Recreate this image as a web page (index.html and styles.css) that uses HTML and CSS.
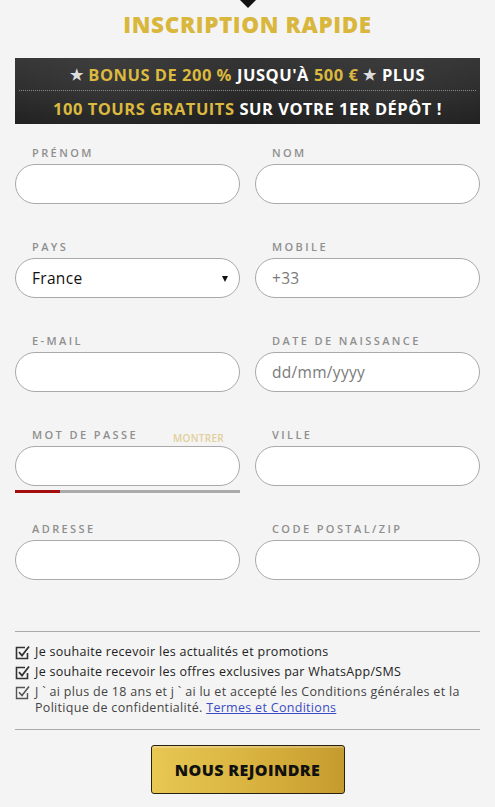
FILE: index.html
```html
<!DOCTYPE html>
<html lang="fr">
<head>
  <meta charset="UTF-8" />
  <meta name="viewport" content="width=device-width, initial-scale=1.0"/>
  <title>Inscription rapide</title>
  <link rel="stylesheet" href="styles.css">
</head>
<body>
  <div class="page">
    <div class="notch"></div>
    <h1 class="title">INSCRIPTION RAPIDE</h1>

    <div class="bonus">
      <div class="bonus-line">
        <span class="star">★</span> <span class="gold">BONUS DE 200 %</span> JUSQU'À <span class="gold">500 €</span> <span class="star">★</span> PLUS
      </div>
      <div class="bonus-sep"></div>
      <div class="bonus-line">
        <span class="gold">100 TOURS GRATUITS</span> SUR VOTRE 1ER DÉPÔT !
      </div>
    </div>

    <form class="form">
      <div class="field">
        <label class="label">PRÉNOM</label>
        <div class="input"></div>
      </div>
      <div class="field">
        <label class="label">NOM</label>
        <div class="input"></div>
      </div>

      <div class="field">
        <label class="label">PAYS</label>
        <div class="input select">
          <span class="value">France</span>
          <span class="caret"></span>
        </div>
      </div>
      <div class="field">
        <label class="label">MOBILE</label>
        <div class="input"><span class="placeholder">+33</span></div>
      </div>

      <div class="field">
        <label class="label">E-MAIL</label>
        <div class="input"></div>
      </div>
      <div class="field">
        <label class="label">DATE DE NAISSANCE</label>
        <div class="input"><span class="placeholder">dd/mm/yyyy</span></div>
      </div>

      <div class="field">
        <div class="label-row">
          <label class="label">MOT DE PASSE</label>
          <span class="show">MONTRER</span>
        </div>
        <div class="input"></div>
        <div class="strength"><div class="strength-fill" style="width: 20%"></div></div>
      </div>
      <div class="field">
        <label class="label">VILLE</label>
        <div class="input"></div>
      </div>

      <div class="field">
        <label class="label">ADRESSE</label>
        <div class="input"></div>
      </div>
      <div class="field">
        <label class="label">CODE POSTAL/ZIP</label>
        <div class="input"></div>
      </div>
    </form>

    <div class="checks">
      <div class="check">
        <svg class="box" viewBox="0 0 15 15" width="15" height="15"><path d="M10 2.5H1.5v11h11V8" fill="none" stroke="#333" stroke-width="1.6"/><path d="M4 7.2l3 3.3L14 1.5" fill="none" stroke="#333" stroke-width="1.8"/></svg>
        <span>Je souhaite recevoir les actualités et promotions</span>
      </div>
      <div class="check">
        <svg class="box" viewBox="0 0 15 15" width="15" height="15"><path d="M10 2.5H1.5v11h11V8" fill="none" stroke="#333" stroke-width="1.6"/><path d="M4 7.2l3 3.3L14 1.5" fill="none" stroke="#333" stroke-width="1.8"/></svg>
        <span>Je souhaite recevoir les offres exclusives par WhatsApp/SMS</span>
      </div>
      <div class="check">
        <svg class="box" viewBox="0 0 15 15" width="15" height="15"><path d="M10 2.5H1.5v11h11V8" fill="none" stroke="#555" stroke-width="1.4"/><path d="M4 7.2l3 3.3L14 1.5" fill="none" stroke="#555" stroke-width="1.6"/></svg>
        <p class="check-text">J ` ai plus de 18 ans et j ` ai lu et accepté les Conditions générales et la Politique de confidentialité. <a href="#" class="link">Termes et Conditions</a></p>
      </div>
    </div>

    <div class="actions">
      <button class="join" type="button">NOUS REJOINDRE</button>
    </div>
  </div>
</body>
</html>
```

FILE: styles.css
```css
body, html {
  margin: 0;
  padding: 0;
  background: #f4f4f4;
  font-family: "Open Sans", "Liberation Sans", sans-serif;
}

.page {
  padding: 0 15px;
  display: flex;
  flex-direction: column;
}

.notch {
  align-self: center;
  width: 0;
  height: 0;
  margin-left: 1px;
  border-left: 8px solid transparent;
  border-right: 8px solid transparent;
  border-top: 8px solid #111;
}

.title {
  margin: 4px 0 0;
  text-align: center;
  font-size: 22.5px;
  line-height: 26px;
  font-weight: 800;
  color: #d9b73c;
  letter-spacing: 0.6px;
}

/* Bonus banner */
.bonus {
  margin-top: 20px;
  height: 66px;
  display: flex;
  flex-direction: column;
  background:
    radial-gradient(circle at 20% 30%, rgba(255,255,255,0.06), transparent 40%),
    radial-gradient(circle at 80% 60%, rgba(255,255,255,0.05), transparent 40%),
    linear-gradient(180deg, #333 0%, #2a2a2a 50%, #1d1d1d 100%);
  color: #fff;
  font-weight: 700;
  font-size: 16.5px;
  letter-spacing: 0.5px;
  text-align: center;
}

.bonus-line {
  flex: 1;
  display: flex;
  align-items: center;
  justify-content: center;
  gap: 5px;
  white-space: nowrap;
}

.bonus-sep {
  height: 1px;
  margin: 0 4px;
  border-top: 1px dotted #8a8a8a;
}

.gold { color: #dcb93f; }
.star { color: #ddd; font-size: 15px; }

/* Form */
.form {
  margin-top: 22px;
  display: grid;
  grid-template-columns: 1fr 1fr;
  column-gap: 15px;
}

.field {
  height: 94px;
  display: flex;
  flex-direction: column;
}

.label-row {
  display: flex;
  justify-content: space-between;
  align-items: flex-end;
  padding-right: 16px;
}

.label {
  display: block;
  padding-left: 17px;
  height: 14px;
  margin-bottom: 4px;
  font-size: 11px;
  line-height: 14px;
  font-weight: 600;
  letter-spacing: 2.4px;
  color: #8f8f8f;
}

.show {
  font-size: 10px;
  line-height: 14px;
  margin-bottom: 1px;
  color: #e3cf9a;
  font-weight: 600;
  letter-spacing: 0.3px;
}

.input {
  box-sizing: border-box;
  height: 40px;
  border: 1px solid #a9a9a9;
  border-radius: 20px;
  background: #fff;
  display: flex;
  align-items: center;
  padding: 0 16px;
  font-size: 15.5px;
}

.value { color: #111; flex: 1; letter-spacing: 0.3px; }
.placeholder { color: #7a7a7a; letter-spacing: 0.3px; }

.caret {
  width: 0;
  height: 0;
  border-left: 3.5px solid transparent;
  border-right: 3.5px solid transparent;
  border-top: 6px solid #111;
  margin-right: -5px;
  margin-top: 2px;
}

.strength {
  margin-top: 4px;
  height: 3px;
  background: #aaa;
}

.strength-fill {
  height: 100%;
  background: #a40d0d;
}

/* Checkboxes */
.checks {
  margin-top: 15px;
  border-top: 1px solid #aaa;
  border-bottom: 1px solid #aaa;
  padding: 12px 0 13px;
  display: flex;
  flex-direction: column;
  gap: 4px;
}

.check {
  display: flex;
  gap: 5px;
  font-size: 12.5px;
  line-height: 16px;
  letter-spacing: 0.3px;
  color: #222;
}

.check-text {
  margin: 0;
  color: #444;
}

.box {
  flex: none;
  margin-top: 1px;
}

.link {
  color: #3a4cc6;
}

/* Button */
.actions {
  display: flex;
  justify-content: center;
  padding-top: 15px;
}

.join {
  width: 194px;
  height: 49px;
  border: 1px solid #2a2210;
  border-radius: 3px;
  background: linear-gradient(90deg, #e8c753 0%, #d9b440 50%, #c69b2e 100%);
  box-shadow: inset 0 2px 0 rgba(255,255,255,0.25);
  font-family: "Open Sans", "Liberation Sans", sans-serif;
  font-weight: 800;
  font-size: 16px;
  letter-spacing: 0.4px;
  color: #111;
  cursor: pointer;
}
```
